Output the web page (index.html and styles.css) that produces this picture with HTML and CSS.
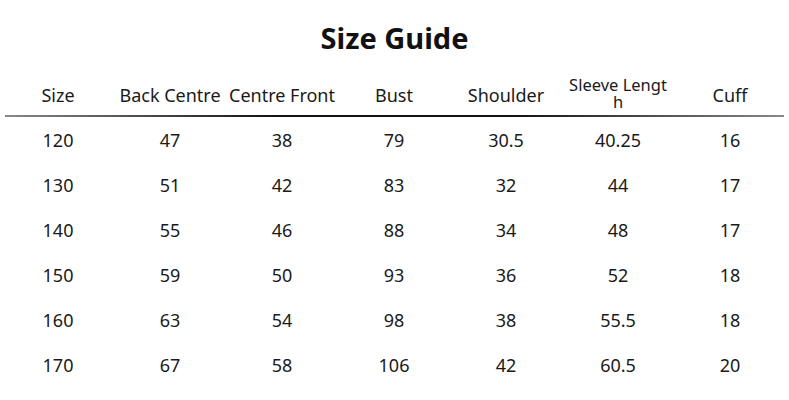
FILE: index.html
```html
<!DOCTYPE html>
<html>
<head>
<meta charset="utf-8">
<link rel="stylesheet" href="styles.css">
</head>
<body>
<div class="page">
  <h1 class="title">Size Guide</h1>
  <div class="row head">
    <div>Size</div><div>Back Centre</div><div>Centre Front</div><div>Bust</div><div>Shoulder</div><div class="wrap">Sleeve Lengt<br>h</div><div>Cuff</div>
  </div>
  <div class="rule"></div>
  <div class="row"><div>120</div><div>47</div><div>38</div><div>79</div><div>30.5</div><div>40.25</div><div>16</div></div>
  <div class="row"><div>130</div><div>51</div><div>42</div><div>83</div><div>32</div><div>44</div><div>17</div></div>
  <div class="row"><div>140</div><div>55</div><div>46</div><div>88</div><div>34</div><div>48</div><div>17</div></div>
  <div class="row"><div>150</div><div>59</div><div>50</div><div>93</div><div>36</div><div>52</div><div>18</div></div>
  <div class="row"><div>160</div><div>63</div><div>54</div><div>98</div><div>38</div><div>55.5</div><div>18</div></div>
  <div class="row"><div>170</div><div>67</div><div>58</div><div>106</div><div>42</div><div>60.5</div><div>20</div></div>
</div>
</body>
</html>
```
FILE: styles.css
```css
html, body { margin: 0; padding: 0; background: #fff; }
.page {
  width: 789px;
  font-family: "Noto Sans", "Open Sans", sans-serif;
  color: #1a1a1a;
}
.title {
  margin: 0;
  height: 74px;
  line-height: 76px;
  text-align: center;
  font-size: 29px;
  font-weight: 700;
  color: #111;
}
.row {
  display: grid;
  grid-template-columns: repeat(7, 112px);
  padding-left: 2px;
  height: 45px;
  align-items: center;
  text-align: center;
  font-size: 18px;
  line-height: 22px;
}
.row.head { height: 41px; }
.row .wrap { font-size: 16.5px; line-height: 17.5px; padding-bottom: 3px; }
.rule {
  height: 2px;
  margin: 0 5px;
  background: linear-gradient(to right, #888, #111 35%, #111 65%, #888);
}
```
